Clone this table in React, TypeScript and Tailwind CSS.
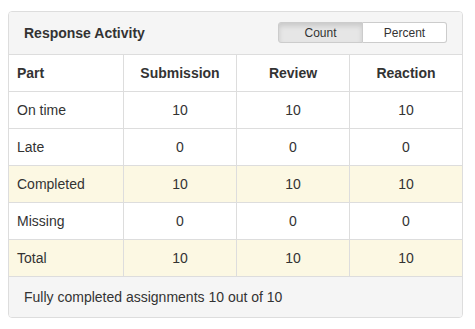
import { useState } from "react"

const rows = [
    { part: 'On time', values: [10, 10, 10], warn: false },
    { part: 'Late', values: [0, 0, 0], warn: false },
    { part: 'Completed', values: [10, 10, 10], warn: true },
    { part: 'Missing', values: [0, 0, 0], warn: false },
    { part: 'Total', values: [10, 10, 10], warn: true },
]

const headers = ['Submission', 'Review', 'Reaction']


const App = () => {

    const [mode, setMode] = useState<'count' | 'percent'>('count')

    return (
        <div className="min-h-screen bg-white pt-[11px] pl-[8px] font-['Liberation_Sans',Arial,sans-serif] text-[14px] text-[#333]">
            <div className="w-[455px] rounded-[4px] border border-[#ddd] overflow-hidden">
                <div className="h-[42px] flex items-center justify-between bg-[#f5f5f5] pl-[15px] pr-[15px]">
                    <h3 className="font-bold text-[14px]">Response Activity</h3>
                    <div className="flex text-[12px] mt-[-1px]">
                        <button
                            onClick={() => setMode('count')}
                            className={`w-[85px] h-[21px] rounded-l-[3px] border border-[#ccc] ${mode === 'count' ? 'bg-[#e6e6e6] shadow-[inset_0_3px_5px_rgba(0,0,0,0.125)]' : 'bg-white'}`}
                        >
                            Count
                        </button>
                        <button
                            onClick={() => setMode('percent')}
                            className={`w-[84px] h-[21px] rounded-r-[3px] border border-l-0 border-[#ccc] ${mode === 'percent' ? 'bg-[#e6e6e6] shadow-[inset_0_3px_5px_rgba(0,0,0,0.125)]' : 'bg-white'}`}
                        >
                            Percent
                        </button>
                    </div>
                </div>

                <div className="flex h-[37px] border-t border-[#ddd] font-bold">
                    <div className="w-[114px] flex items-center px-[8px]">Part</div>
                    {headers.map((head, i) => (
                        <div key={i} className="w-[113px] flex items-center justify-center border-l border-[#ddd]">{head}</div>
                    ))}
                </div>

                {rows.map((row, index) => (
                    <div key={index} className={`flex h-[37px] border-t border-[#ddd] ${row.warn ? 'bg-[#fcf8e3]' : 'bg-white'}`}>
                        <div className="w-[114px] flex items-center px-[8px]">{row.part}</div>
                        {row.values.map((v, i) => (
                            <div key={i} className="w-[113px] flex items-center justify-center border-l border-[#ddd]">{v}</div>
                        ))}
                    </div>
                ))}

                <div className="h-[41px] flex items-center border-t border-[#ddd] bg-[#f5f5f5] px-[15px]">
                    Fully completed assignments 10 out of 10
                </div>
            </div>
        </div>
    )
}

export default App
